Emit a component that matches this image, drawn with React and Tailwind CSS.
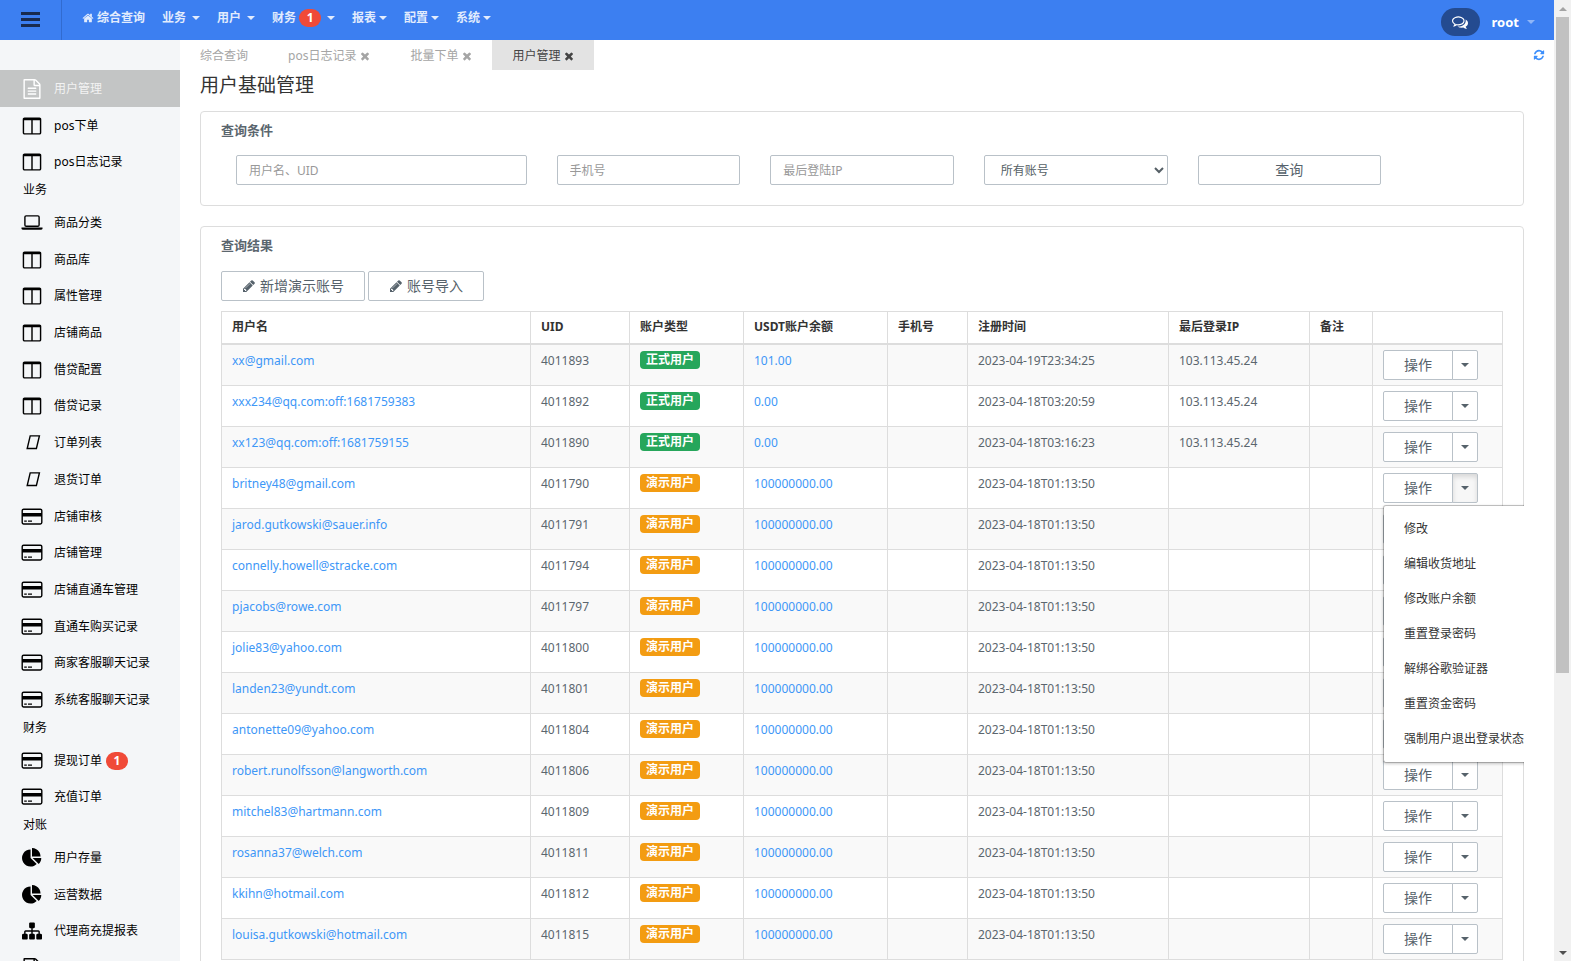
import React from "react";

const PATHS = {
  home: "M1472 992v480q0 26-19 45t-45 19h-384v-384h-256v384h-384q-26 0-45-19t-19-45v-480q0-1 .5-3t.5-3l575-474 575 474q1 2 1 6zm223-69l-62 74q-8 9-21 11h-3q-13 0-21-7l-692-577-692 577q-12 8-24 7-13-2-21-11l-62-74q-8-10-7-23.5t11-21.5l719-599q32-26 76-26t76 26l244 204v-195q0-14 9-23t23-9h192q14 0 23 9t9 23v408l219 182q10 8 11 21.5t-7 23.5z",
  times: "M1490 1322q0 40-28 68l-136 136q-28 28-68 28t-68-28l-294-294-294 294q-28 28-68 28t-68-28l-136-136q-28-28-28-68t28-68l294-294-294-294q-28-28-28-68t28-68l136-136q28-28 68-28t68 28l294 294 294-294q28-28 68-28t68 28l136 136q28 28 28 68t-28 68l-294 294 294 294q28 28 28 68z",
  pencil: "M491 1536l91-91-235-235-91 91v107h128v128h107zm523-928q0-22-22-22-10 0-17 7l-542 542q-7 7-7 17 0 22 22 22 10 0 17-7l542-542q7-7 7-17zm-54-192l416 416-832 832h-416v-416zm683 96q0 53-37 90l-166 166-416-416 166-165q36-38 90-38 53 0 91 38l235 234q37 39 37 91z",
  refresh: "M1639 1056q0 5-1 7-64 268-268 434.5t-478 166.5q-146 0-282.5-55t-243.5-157l-129 129q-19 19-45 19t-45-19-19-45v-448q0-26 19-45t45-19h448q26 0 45 19t19 45-19 45l-137 137q71 66 161 102t187 36q134 0 250-65t186-179q11-17 53-117 8-23 30-23h192q13 0 22.5 9.5t9.5 22.5zm25-800v448q0 26-19 45t-45 19h-448q-26 0-45-19t-19-45 19-45l138-138q-148-137-349-137-134 0-250 65t-186 179q-11 17-53 117-8 23-30 23h-199q-13 0-22.5-9.5t-9.5-22.5v-7q65-268 270-434.5t480-166.5q146 0 284 55.5t245 156.5l130-129q19-19 45-19t45 19 19 45z",
  comments: "M704 384q-153 0-286 52t-211.5 141-78.5 191q0 82 53 158t149 132l97 56-35 84q34-20 62-39l44-31 53 10q78 14 153 14 153 0 286-52t211.5-141 78.5-191-78.5-191-211.5-141-286-52zm0-128q191 0 353.5 68.5t256.5 186.5 94 257-94 257-256.5 186.5-353.5 68.5q-86 0-176-16-124 88-278 128-36 9-86 16h-3q-11 0-20.5-8t-11.5-21q-1-3-1-6.5t.5-6.5 2-6l2.5-5 3.5-5.5 4-5 4.5-5 4-4.5q5-6 23-25t26-29.5 22.5-29 25-38.5 20.5-44q-124-72-195-177t-71-224q0-139 94-257t256.5-186.5 353.5-68.5zm822 1169q10 24 20.5 44t25 38.5 22.5 29 26 29.5 23 25q1 1 4 4.5t4.5 5 4 5 3.5 5.5l2.5 5 2 6 .5 6.5-1 6.5q-3 14-13 22t-22 7q-50-7-86-16-154-40-278-128-90 16-176 16-271 0-472-132 58 4 88 4 161 0 309-45t264-129q125-92 192-212t67-254q0-77-23-152 129 71 204 178t75 230q0 120-71 224.5t-195 176.5z",
  file: "M1596 380q28 28 48 76t20 88v1152q0 40-28 68t-68 28h-1344q-40 0-68-28t-28-68v-1600q0-40 28-68t68-28h896q40 0 88 20t76 48zm-444-244v376h376q-10-29-22-41l-313-313q-12-12-41-22zm384 1528v-1024h-416q-40 0-68-28t-28-68v-416h-768v1536h1280zm-1024-864q0-14 9-23t23-9h704q14 0 23 9t9 23v64q0 14-9 23t-23 9h-704q-14 0-23-9t-9-23v-64zm736 224q14 0 23 9t9 23v64q0 14-9 23t-23 9h-704q-14 0-23-9t-9-23v-64q0-14 9-23t23-9h704zm0 256q14 0 23 9t9 23v64q0 14-9 23t-23 9h-704q-14 0-23-9t-9-23v-64q0-14 9-23t23-9h704z",
  columns: "M224 1536h608v-1152h-640v1120q0 13 9.5 22.5t22.5 9.5zm1376-32v-1120h-640v1152h608q13 0 22.5-9.5t9.5-22.5zm128-1216v1216q0 66-47 113t-113 47h-1344q-66 0-113-47t-47-113v-1216q0-66 47-113t113-47h1344q66 0 113 47t47 113z",
  pie: "M768 890l546 546q-106 108-247.5 168t-298.5 60q-209 0-385.5-103t-279.5-279.5-103-385.5 103-385.5 279.5-279.5 385.5-103v762zm187 6h773q0 157-60 298.5t-168 247.5zm709-128h-768v-768q209 0 385.5 103t279.5 279.5 103 385.5z",
  sitemap: "M1792 1248v320q0 40-28 68t-68 28h-320q-40 0-68-28t-28-68v-320q0-40 28-68t68-28h96v-192h-512v192h96q40 0 68 28t28 68v320q0 40-28 68t-68 28h-320q-40 0-68-28t-28-68v-320q0-40 28-68t68-28h96v-192h-512v192h96q40 0 68 28t28 68v320q0 40-28 68t-68 28h-320q-40 0-68-28t-28-68v-320q0-40 28-68t68-28h96v-192q0-52 38-90t90-38h512v-192h-96q-40 0-68-28t-28-68v-320q0-40 28-68t68-28h320q40 0 68 28t28 68v320q0 40-28 68t-68 28h-96v192h512q52 0 90 38t38 90v192h96q40 0 68 28t28 68z",
};

function Icon({ name, className }) {
  return (
    <svg
      viewBox={name === "times" ? "150 0 1493 1792" : "0 0 1792 1792"}
      fill="currentColor"
      aria-hidden="true"
      className={className}
    >
      <path d={PATHS[name]} />
    </svg>
  );
}

function SideIcon({ name }) {
  if (name === "laptop")
    return (
      <svg viewBox="0 0 22 20" aria-hidden="true" className="h-5 w-[22px]">
        <rect x="3.9" y="2.9" width="14.2" height="10.4" rx="1.2" fill="none" stroke="currentColor" strokeWidth="1.4" />
        <path d="M0.5 14.5h21v1q0 1.3-1.8 1.3H2.3Q0.5 16.8 0.5 15.5z" fill="currentColor" />
      </svg>
    );
  if (name === "card")
    return (
      <svg viewBox="0 0 22 20" aria-hidden="true" className="h-5 w-[22px]">
        <rect x="1.2" y="2.2" width="19.6" height="14.8" rx="1.4" fill="none" stroke="currentColor" strokeWidth="1.4" />
        <path d="M1 6h20v3.4H1zM3.2 13.4h2.6v1.3H3.2zM7 13.4h4v1.3H7z" fill="currentColor" />
      </svg>
    );
  if (name === "blank")
    return (
      <svg viewBox="0 0 22 20" aria-hidden="true" className="h-5 w-[22px]">
        <path d="M9.2 2.9h9.2l-3 12.6H6.2z" fill="none" stroke="currentColor" strokeWidth="1.4" />
      </svg>
    );
  return <Icon name={name} className="size-5" />;
}

function Caret({ className = "" }) {
  return (
    <svg viewBox="0 0 8 4" fill="currentColor" aria-hidden="true" className={`h-1 w-2 ${className}`}>
      <path d="M0 0h8L4 4z" />
    </svg>
  );
}

function Count({ children }) {
  return (
    <span className="min-w-[22px] rounded-full bg-[#f04a38] text-center text-xs leading-[18px] font-bold text-white">
      {children}
    </span>
  );
}

function SideItem({ icon, label, count, active }) {
  return (
    <li className="flex flex-1">
      <a
        href="#"
        className={`flex min-h-9 flex-1 items-center pt-px pl-[21px] ${
          active ? "bg-[#c3c5c5] text-white" : "text-black"
        }`}
      >
        <span className="flex w-[22px] justify-center">
          <SideIcon name={icon} />
        </span>
        <span className={`ml-[11px] ${active ? "opacity-80" : ""}`}>{label}</span>
        {count && (
          <span className="ml-1 flex">
            <Count>{count}</Count>
          </span>
        )}
      </a>
    </li>
  );
}

function SideGroup({ title, items, className }) {
  return (
    <>
      {title && <h2 className="h-6 pl-[23px] leading-[20px] text-black">{title}</h2>}
      <ul className={`flex flex-col ${className}`}>
        {items.map((it) => (
          <SideItem key={it.label} {...it} />
        ))}
      </ul>
    </>
  );
}

const top = [
  { icon: "file", label: "用户管理", active: true },
  { icon: "columns", label: "pos下单" },
  { icon: "columns", label: "pos日志记录" },
];
const business = [
  { icon: "laptop", label: "商品分类" },
  { icon: "columns", label: "商品库" },
  { icon: "columns", label: "属性管理" },
  { icon: "columns", label: "店铺商品" },
  { icon: "columns", label: "借贷配置" },
  { icon: "columns", label: "借贷记录" },
  { icon: "blank", label: "订单列表" },
  { icon: "blank", label: "退货订单" },
  { icon: "card", label: "店铺审核" },
  { icon: "card", label: "店铺管理" },
  { icon: "card", label: "店铺直通车管理" },
  { icon: "card", label: "直通车购买记录" },
  { icon: "card", label: "商家客服聊天记录" },
  { icon: "card", label: "系统客服聊天记录" },
];
const finance = [
  { icon: "card", label: "提现订单", count: "1" },
  { icon: "card", label: "充值订单" },
];
const audit = [
  { icon: "pie", label: "用户存量" },
  { icon: "pie", label: "运营数据" },
  { icon: "sitemap", label: "代理商充提报表" },
  { icon: "file", label: "" },
];

const users = [
  ["xx@gmail.com", "4011893", true, "101.00", "2023-04-19T23:34:25", "103.113.45.24"],
  ["xxx234@qq.com:off:1681759383", "4011892", true, "0.00", "2023-04-18T03:20:59", "103.113.45.24"],
  ["xx123@qq.com:off:1681759155", "4011890", true, "0.00", "2023-04-18T03:16:23", "103.113.45.24"],
  ["britney48@gmail.com", "4011790"],
  ["jarod.gutkowski@sauer.info", "4011791"],
  ["connelly.howell@stracke.com", "4011794"],
  ["pjacobs@rowe.com", "4011797"],
  ["jolie83@yahoo.com", "4011800"],
  ["landen23@yundt.com", "4011801"],
  ["antonette09@yahoo.com", "4011804"],
  ["robert.runolfsson@langworth.com", "4011806"],
  ["mitchel83@hartmann.com", "4011809"],
  ["rosanna37@welch.com", "4011811"],
  ["kkihn@hotmail.com", "4011812"],
  ["louisa.gutkowski@hotmail.com", "4011815"],
];

const actions = ["修改", "编辑收货地址", "修改账户余额", "重置登录密码", "解绑谷歌验证器", "重置资金密码", "强制用户退出登录状态"];

const field =
  "h-[30px] w-full rounded-[2px] border border-[#b9c1c8] bg-white px-3 text-xs text-[#555f66] placeholder:text-[#999]";
const button = "h-[30px] rounded-[2px] border border-[#b9c1c8] bg-white text-sm text-[#56626b]";
const cell = "border border-[#ddd] px-[10px] align-top";

function ActionButtons({ open }) {
  return (
    <div className="relative flex">
      <button type="button" className={`${button} w-[70px] rounded-r-none`}>
        操作
      </button>
      <button
        type="button"
        aria-label="更多操作"
        aria-expanded={!!open}
        className={`-ml-px flex h-[30px] w-[26px] items-center justify-center rounded-r-[2px] border border-[#b9c1c8] text-[#56626b] ${
          open ? "bg-[#f7f7f7] shadow-[inset_0_3px_5px_rgba(0,0,0,0.125)]" : "bg-white"
        }`}
      >
        <Caret />
      </button>
      {open && (
        <ul className="absolute top-full left-0 z-10 mt-[2px] w-[162px] rounded-[3px] border border-black/20 bg-white bg-clip-padding pt-[5px] pb-[6px] shadow-[0_1px_3px_rgba(0,0,0,0.2)]">
          {actions.map((a) => (
            <li key={a}>
              <a href="#" className="block pl-5 leading-[35px] whitespace-nowrap text-[#333]">
                {a}
              </a>
            </li>
          ))}
        </ul>
      )}
    </div>
  );
}

function NavItem({ label, count, tight }) {
  return (
    <a href="#" className={`flex items-center ${tight ? "gap-[3px]" : "gap-[6px]"}`}>
      <span className="flex gap-[3px]">
        {label}
        {count && <Count>{count}</Count>}
      </span>
      <Caret />
    </a>
  );
}

function Tab({ label, closable, active }) {
  return (
    <a
      href="#"
      className={`flex h-[30px] items-center gap-1 px-5 pt-px ${active ? "bg-[#e3e3e3] text-[#444]" : "text-[#a5a5a5]"}`}
    >
      {label}
      {closable && <Icon name="times" className="h-3 w-[10px]" />}
    </a>
  );
}

export default function App() {
  return (
    <div className="flex h-screen overflow-hidden bg-white font-['Noto_Sans','Noto_Sans_CJK_SC',sans-serif] text-xs leading-[18px] text-[#5b666e]">
      <div className="flex min-w-0 flex-1 flex-col">
        <header className="flex h-10 shrink-0 items-stretch bg-[#3c7ff1] font-bold text-[#e2ecfd]">
          <button
            type="button"
            aria-label="菜单"
            className="flex w-[62px] items-center justify-center border-r border-[#316bd0] text-[#182b50]"
          >
            <svg viewBox="0 0 20 18" fill="currentColor" aria-hidden="true" className="h-[18px] w-5">
              <path d="M0 1h19v3H0zM0 7h19v3H0zM0 13h19v3H0z" />
            </svg>
          </button>
          <nav className="flex h-9 flex-1 items-center gap-[17px] pl-5">
            <a href="#" className="flex items-center gap-[3px]">
              <Icon name="home" className="size-3" />
              综合查询
            </a>
            <NavItem label="业务" />
            <NavItem label="用户" />
            <NavItem label="财务" count="1" />
            <NavItem label="报表" tight />
            <NavItem label="配置" tight />
            <NavItem label="系统" tight />
          </nav>
          <div className="flex items-center gap-3 pt-[3px] pr-[19px]">
            <button type="button" aria-label="消息" className="flex h-7 w-[39px] items-center justify-center rounded-full bg-[#244b90] text-white">
              <Icon name="comments" className="size-4" />
            </button>
            <a href="#" className="flex items-center gap-2 text-[13px] text-white">
              root
              <Caret className="text-[#8fb6f8]" />
            </a>
          </div>
        </header>

        <div className="flex min-h-0 flex-1">
          <aside className="w-[180px] shrink-0 overflow-hidden bg-[#f4f6f8] pt-[30px]">
            <SideGroup items={top} className="h-[110px]" />
            <SideGroup title="业务" items={business} className="h-[514px]" />
            <SideGroup title="财务" items={finance} className="h-[73px]" />
            <SideGroup title="对账" items={audit} className="h-[147px]" />
          </aside>

          <main className="min-w-0 flex-1 overflow-hidden">
            <div className="flex items-center justify-between pr-[9px]">
              <nav className="flex">
                <Tab label="综合查询" />
                <Tab label="pos日志记录" closable />
                <Tab label="批量下单" closable />
                <Tab label="用户管理" closable active />
              </nav>
              <button type="button" aria-label="刷新" className="text-[#3c8ffc]">
                <Icon name="refresh" className="size-3" />
              </button>
            </div>

            <div className="mr-[30px] overflow-x-clip pl-5">
              <h1 className="mb-[10px] text-[19px] leading-[31px] text-[#333]">用户基础管理</h1>

              <section className="mb-5 rounded-[4px] border border-[#ddd] px-5 pt-[9px] pb-5">
                <h2 className="mb-4 text-[13px] leading-[18px] font-bold">查询条件</h2>
                <form className="grid grid-cols-12" onSubmit={(e) => e.preventDefault()}>
                  <div className="col-span-3 px-[15px]">
                    <input aria-label="用户名、UID" placeholder="用户名、UID" className={field} />
                  </div>
                  <div className="col-span-2 px-[15px]">
                    <input aria-label="手机号" placeholder="手机号" className={field} />
                  </div>
                  <div className="col-span-2 px-[15px]">
                    <input aria-label="最后登陆IP" placeholder="最后登陆IP" className={field} />
                  </div>
                  <div className="col-span-2 px-[15px]">
                    <select aria-label="账号类型" className="h-[30px] w-full rounded-[2px] border border-[#b9c1c8] bg-white pl-3 text-xs text-[#555f66]">
                      <option>所有账号</option>
                    </select>
                  </div>
                  <div className="col-span-2 px-[15px]">
                    <button type="submit" className={`${button} w-full`}>
                      查询
                    </button>
                  </div>
                </form>
              </section>

              <section className="rounded-[4px] border border-[#ddd] px-5 pt-[9px] pb-5">
                <h2 className="mb-[17px] text-[13px] leading-[18px] font-bold">查询结果</h2>
                <div className="mb-[10px] flex gap-[3px]">
                  {["新增演示账号", "账号导入"].map((t) => (
                    <button key={t} type="button" className={`${button} flex items-center gap-1 px-5`}>
                      <Icon name="pencil" className="size-[14px]" />
                      {t}
                    </button>
                  ))}
                </div>
                <table className="w-full table-fixed border-collapse text-left">
                  <colgroup>
                    <col />
                    <col className="w-[99px]" />
                    <col className="w-[114px]" />
                    <col className="w-[144px]" />
                    <col className="w-[80px]" />
                    <col className="w-[201px]" />
                    <col className="w-[141px]" />
                    <col className="w-[63px]" />
                    <col className="w-[130px]" />
                  </colgroup>
                  <thead>
                    <tr className="h-8 text-[#333]">
                      {["用户名", "UID", "账户类型", "USDT账户余额", "手机号", "注册时间", "最后登录IP", "备注", ""].map((h, i) => (
                        <th key={i} className="border border-b-2 border-[#ddd] px-[10px] font-bold">
                          {h}
                        </th>
                      ))}
                    </tr>
                  </thead>
                  <tbody>
                    {users.map(([name, uid, real, balance = "100000000.00", time = "2023-04-18T01:13:50", ip], i) => (
                      <tr key={uid} className="h-[41px] odd:bg-[#f9f9f9] first:h-[42px]">
                        <td className={`${cell} pt-[7px]`}>
                          <a href="#" className="text-[#3e97f7]">
                            {name}
                          </a>
                        </td>
                        <td className={`${cell} pt-[7px]`}>{uid}</td>
                        <td className={`${cell} pt-[6px]`}>
                          <span
                            className={`block w-[60px] rounded-[4px] text-center leading-[18px] font-bold text-white ${
                              real ? "bg-[#26a65b]" : "bg-[#f39c12]"
                            }`}
                          >
                            {real ? "正式用户" : "演示用户"}
                          </span>
                        </td>
                        <td className={`${cell} pt-[7px]`}>
                          <a href="#" className="text-[#3e97f7]">
                            {balance}
                          </a>
                        </td>
                        <td className={cell} />
                        <td className={`${cell} pt-[7px]`}>{time}</td>
                        <td className={`${cell} pt-[7px]`}>{ip}</td>
                        <td className={cell} />
                        <td className={`${cell} pt-[5px]`}>
                          <ActionButtons open={i === 3} />
                        </td>
                      </tr>
                    ))}
                  </tbody>
                </table>
              </section>
            </div>
          </main>
        </div>
      </div>

      <div aria-hidden="true" className="flex w-[17px] shrink-0 flex-col items-center bg-[#f1f1f1]">
        <div className="flex h-[17px] items-center">
          <Caret className="rotate-180 text-[#a3a3a3]" />
        </div>
        <div className="min-h-0 w-[13px] flex-[656] bg-[#c1c1c1]" />
        <div className="flex-[271]" />
        <div className="flex h-[17px] items-center">
          <Caret className="text-[#505050]" />
        </div>
      </div>
    </div>
  );
}
